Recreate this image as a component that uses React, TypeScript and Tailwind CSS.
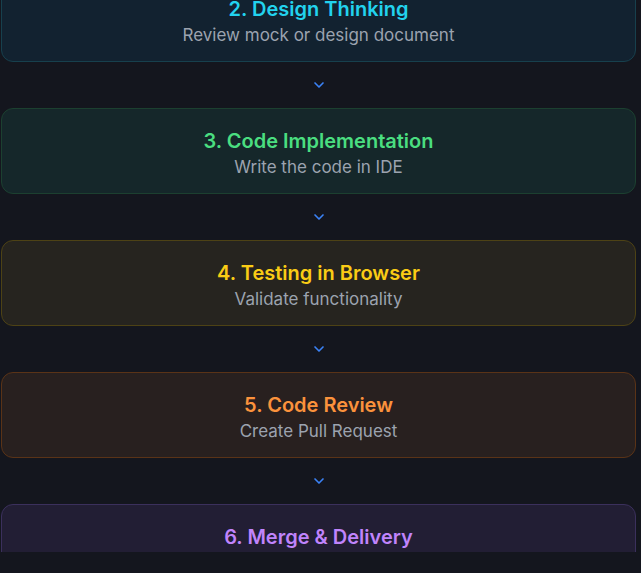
import { ChevronDown } from 'lucide-react';

const steps = [
  { title: '2. Design Thinking', desc: 'Review mock or design document', card: 'bg-[#122230] border-[#17404d]', text: 'text-[#22d3ee]' },
  { title: '3. Code Implementation', desc: 'Write the code in IDE', card: 'bg-[#15272a] border-[#1c4030]', text: 'text-[#4ade80]' },
  { title: '4. Testing in Browser', desc: 'Validate functionality', card: 'bg-[#26241f] border-[#4d4215]', text: 'text-[#facc15]' },
  { title: '5. Code Review', desc: 'Create Pull Request', card: 'bg-[#28201f] border-[#5a3317]', text: 'text-[#fb923c]' },
  { title: '6. Merge & Delivery', desc: 'Ship to production', card: 'bg-[#221e34] border-[#3b305c]', text: 'text-[#c084fc]' },
];

export default function App() {
  return (
    <div className="min-h-[573px] bg-[#14161e]" style={{ fontFamily: 'Inter, "Noto Sans", sans-serif' }}>
      <div className="h-[552px] overflow-hidden">
        <div className="-mt-[24px] pl-px pr-[5px] flex flex-col">
          {steps.map((s, i) => (
            <div key={i}>
              {i > 0 && (
                <div className="flex justify-center py-[15px]">
                  <ChevronDown className="w-4 h-4 text-[#3b82f6]" strokeWidth={2.5} />
                </div>
              )}
              <div className={`rounded-xl border pt-[18px] pb-[14px] text-center ${s.card}`}>
                <div className={`text-[20px] leading-7 font-semibold ${s.text}`}>{s.title}</div>
                <div className="text-[17px] leading-6 text-[#9ca3af]">{s.desc}</div>
              </div>
            </div>
          ))}
        </div>
      </div>
    </div>
  );
}
